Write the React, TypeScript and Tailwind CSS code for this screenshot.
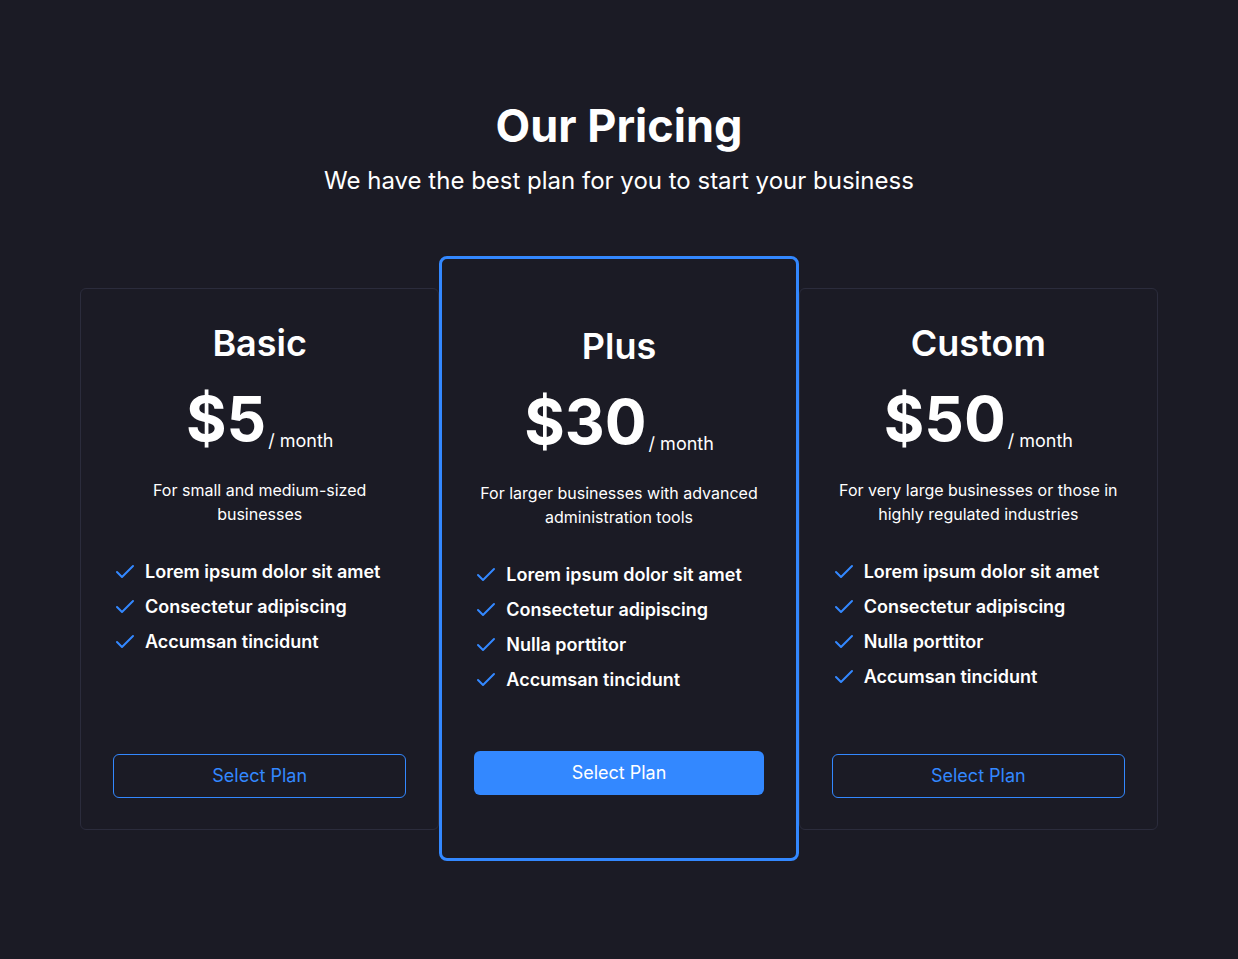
import { Check } from "lucide-react";

interface Plan {
  name: string;
  price: string;
  description: string;
  features: string[];
  featured?: boolean;
}

const PLANS: Plan[] = [
  {
    name: "Basic",
    price: "$5",
    description: "For small and medium-sized businesses",
    features: ["Lorem ipsum dolor sit amet", "Consectetur adipiscing", "Accumsan tincidunt"],
  },
  {
    name: "Plus",
    price: "$30",
    description: "For larger businesses with advanced administration tools",
    features: [
      "Lorem ipsum dolor sit amet",
      "Consectetur adipiscing",
      "Nulla porttitor",
      "Accumsan tincidunt",
    ],
    featured: true,
  },
  {
    name: "Custom",
    price: "$50",
    description: "For very large businesses or those in highly regulated industries",
    features: [
      "Lorem ipsum dolor sit amet",
      "Consectetur adipiscing",
      "Nulla porttitor",
      "Accumsan tincidunt",
    ],
  },
];

function PlanCard({ plan }: { plan: Plan }) {
  return (
    <div
      className={
        plan.featured
          ? "relative z-10 flex h-[605px] flex-col items-center rounded-lg border-[3px] border-[#3388ff] bg-[#1b1b25] px-8 pt-[67px] pb-[63px] text-center"
          : "flex h-[542px] flex-col items-center rounded-md border border-[#2b2c3c] bg-[#1b1b25] px-8 pt-[34px] pb-[31px] text-center"
      }
    >
      <h2 className="text-4xl leading-10 font-semibold">{plan.name}</h2>
      <div className="mt-[25px] flex items-end">
        <span className="text-[62px] leading-none font-bold">{plan.price}</span>
        <span className="ml-0.5 text-lg leading-none">/ month</span>
      </div>
      <p className="mt-7 text-base leading-6">{plan.description}</p>
      <ul className="mt-8 flex w-full flex-col gap-[7px] text-left">
        {plan.features.map((f) => (
          <li key={f} className="flex items-center gap-2 text-lg leading-7 font-semibold">
            <Check className="h-6 w-6 flex-shrink-0 text-[#3388ff]" strokeWidth={2} />
            {f}
          </li>
        ))}
      </ul>
      <button
        className={
          plan.featured
            ? "mt-auto h-11 w-full rounded-md bg-[#3388ff] text-lg text-white"
            : "mt-auto h-11 w-full rounded-md border border-[#3388ff] text-lg text-[#3388ff]"
        }
      >
        Select Plan
      </button>
    </div>
  );
}

export default function App() {
  return (
    <div
      className="flex min-h-screen flex-col items-center bg-[#1b1b25] pt-[103px] text-white"
      style={{ fontFamily: "Inter, 'Noto Sans', sans-serif" }}
    >
      <h1 className="text-[45px] leading-none font-bold">Our Pricing</h1>
      <p className="mt-[17px] text-2xl leading-8">We have the best plan for you to start your business</p>

      <div className="mt-[59px] grid w-[1078px] grid-cols-3 items-center">
        {PLANS.map((plan) => (
          <PlanCard key={plan.name} plan={plan} />
        ))}
      </div>
    </div>
  );
}
